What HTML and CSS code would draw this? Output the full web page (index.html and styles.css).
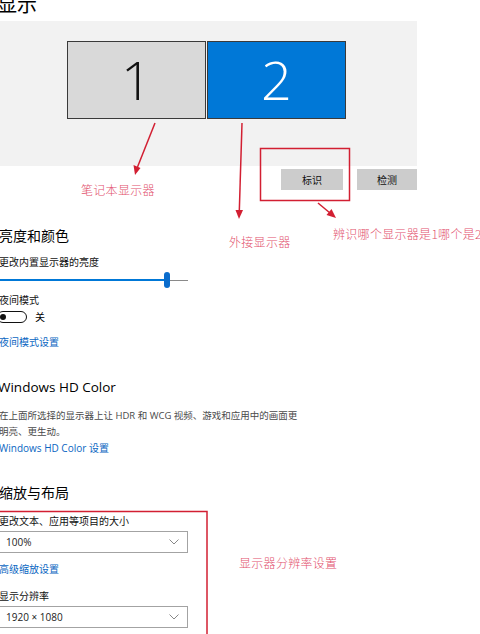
FILE: index.html
```html
<!DOCTYPE html>
<html lang="zh-CN">
<head>
<meta charset="utf-8">
<title>显示</title>
<link rel="stylesheet" href="styles.css">
</head>
<body>
<div class="page">
  <h1 class="title">显示</h1>

  <div class="arrange">
    <div class="monitors">
      <div class="monitor m1">1</div>
      <div class="monitor m2">2</div>
    </div>
  </div>
  <div class="btn-row">
    <div class="btn b1">标识</div>
    <div class="btn b2">检测</div>
  </div>

  <h2 class="sec sec-bright">亮度和颜色</h2>
  <div class="label l-bright">更改内置显示器的亮度</div>
  <div class="slider">
    <div class="track-on"></div>
    <div class="thumb"></div>
    <div class="track-off"></div>
  </div>
  <div class="label l-night">夜间模式</div>
  <div class="toggle-row">
    <div class="toggle"><span class="knob"></span></div>
    <span class="toggle-text">关</span>
  </div>
  <a class="link l-nightset">夜间模式设置</a>

  <h2 class="sec sec-hd">Windows HD Color</h2>
  <p class="desc">在上面所选择的显示器上让 HDR 和 WCG 视频、游戏和应用中的画面更明亮、更生动。</p>
  <a class="link l-hdset">Windows HD Color 设置</a>

  <h2 class="sec sec-scale">缩放与布局</h2>
  <div class="label l-size">更改文本、应用等项目的大小</div>
  <div class="select s1"><span>100%</span>
    <svg class="chev" width="10" height="6" viewBox="0 0 10 6"><polyline points="0.5,0.5 5,5 9.5,0.5" fill="none" stroke="#888" stroke-width="1"/></svg>
  </div>
  <a class="link l-adv">高级缩放设置</a>
  <div class="label l-res">显示分辨率</div>
  <div class="select s2"><span>1920 × 1080</span>
    <svg class="chev" width="10" height="6" viewBox="0 0 10 6"><polyline points="0.5,0.5 5,5 9.5,0.5" fill="none" stroke="#888" stroke-width="1"/></svg>
  </div>
</div>

<svg class="marks" width="480" height="634" viewBox="0 0 480 634">
  <g stroke="#d21f32" stroke-width="1.5" fill="none">
    <line x1="155" y1="123" x2="137.5" y2="167"/>
    <line x1="242" y1="123" x2="239.3" y2="211"/>
    <line x1="318" y1="203" x2="330" y2="213"/>
    <rect x="260.5" y="148.5" width="89" height="52"/>
    <rect x="-5" y="511.5" width="212" height="140"/>
  </g>
  <g fill="#d21f32">
    <polygon points="135,175 133.5,165 140.5,168"/>
    <polygon points="239,219 235.5,210 243,210"/>
    <polygon points="336,218 326.5,215 331.5,209"/>
  </g>
</svg>
<div class="note n1">笔记本显示器</div>
<div class="note n2">外接显示器</div>
<div class="note n3">辨识哪个显示器是1哪个是2</div>
<div class="note n4">显示器分辨率设置</div>
</body>
</html>
```
FILE: styles.css
```css
html, body {
  margin: 0;
  padding: 0;
}
body {
  width: 480px;
  height: 634px;
  overflow: hidden;
  background: #fff;
  position: relative;
  font-family: "Open Sans", "Noto Sans CJK SC", sans-serif;
  color: #000;
}
.page {
  display: flex;
  flex-direction: column;
  align-items: flex-start;
}
.title {
  margin: -6px 0 0 -3px;
  font-family: "Noto Sans CJK SC", sans-serif;
  font-weight: 400;
  font-size: 20px;
  line-height: 20px;
  height: 20px;
}
.arrange {
  margin-top: 7px;
  width: 417px;
  height: 145px;
  background: #f2f2f2;
  box-sizing: border-box;
  padding: 20px 0 0 67px;
}
.monitors {
  display: flex;
  gap: 1px;
}
.monitor {
  box-sizing: border-box;
  width: 139px;
  height: 78px;
  border: 1px solid #3a3a3a;
  display: flex;
  align-items: center;
  justify-content: center;
  font-family: "Open Sans", sans-serif;
  font-weight: 300;
  font-size: 54px;
  line-height: 1;
  padding-bottom: 2px;
}
.m1 {
  background: #d9d9d9;
  color: #111;
}
.m2 {
  background: #0078d7;
  color: #fff;
}
.btn-row {
  margin-top: 3px;
  width: 417px;
  display: flex;
  justify-content: flex-end;
  gap: 14px;
}
.btn {
  height: 21px;
  background: #cccccc;
  font-family: "Noto Sans CJK SC", sans-serif;
  font-size: 10px;
  line-height: 21px;
  text-align: center;
  color: #111;
}
.b1 { width: 62px; }
.b2 { width: 60px; }

.sec {
  margin: 0 0 0 -1px;
  font-family: "Noto Sans CJK SC", sans-serif;
  font-weight: 400;
  font-size: 14px;
  line-height: 20px;
  height: 20px;
}
.sec-bright { margin-top: 35px; }
.sec-hd {
  font-family: "Open Sans", sans-serif;
  font-size: 13.5px;
  margin-top: 28px;
  margin-left: -2px;
}
.sec-scale { margin-top: 27px; }

.label, .link {
  font-family: "Noto Sans CJK SC", sans-serif;
  font-size: 10px;
  line-height: 14px;
  height: 14px;
  margin-left: -1px;
  color: #111;
}
.link {
  color: #0a66c2;
  display: block;
}
.l-bright { margin-top: 10px; }
.slider {
  margin-top: 3px;
  width: 188px;
  height: 16px;
  display: flex;
  align-items: center;
}
.track-on {
  width: 164px;
  height: 2px;
  background: #0078d7;
}
.thumb {
  width: 6px;
  height: 16px;
  border-radius: 3px;
  background: #0a6ccc;
}
.track-off {
  flex: 1;
  height: 1px;
  background: #8a8a8a;
}
.l-night { margin-top: 5px; }
.toggle-row {
  margin-top: 4px;
  height: 12px;
  display: flex;
  align-items: center;
}
.toggle {
  box-sizing: border-box;
  width: 30px;
  height: 12px;
  margin-left: -3px;
  border: 1.5px solid #111;
  border-radius: 6px;
  display: flex;
  align-items: center;
  padding-left: 2px;
}
.knob {
  width: 6px;
  height: 6px;
  border-radius: 50%;
  background: #111;
}
.toggle-text {
  margin-left: 8px;
  font-family: "Noto Sans CJK SC", sans-serif;
  font-size: 10px;
  line-height: 12px;
}
.l-nightset { margin-top: 12px; }

.desc {
  margin: 11px 0 0 -1px;
  width: 300px;
  font-family: "Open Sans", "Noto Sans CJK SC", sans-serif;
  font-size: 9.5px;
  line-height: 16px;
  color: #4a4a4a;
}
.l-hdset {
  margin-top: 1px;
  font-family: "Open Sans", "Noto Sans CJK SC", sans-serif;
}
.l-size { margin-top: 12px; }
.select {
  box-sizing: border-box;
  margin-top: 3px;
  margin-left: -4px;
  width: 192px;
  height: 22px;
  border: 1.5px solid #a3a3a3;
  display: flex;
  align-items: center;
  justify-content: space-between;
  padding: 0 8px 0 9px;
  font-family: "Open Sans", sans-serif;
  font-size: 10px;
  color: #222;
}
.l-adv { margin-top: 9px; }
.l-res { margin-top: 13px; }

.marks {
  position: absolute;
  left: 0;
  top: 0;
  pointer-events: none;
}
.note {
  position: absolute;
  font-family: "Noto Sans CJK SC", serif;
  font-weight: 300;
  font-size: 12px;
  line-height: 14px;
  letter-spacing: 0.3px;
  color: #e2506c;
  white-space: nowrap;
}
.n1 { left: 81px; top: 183px; }
.n2 { left: 229px; top: 235px; }
.n3 { left: 333px; top: 227px; }
.n4 { left: 239px; top: 556px; }
```
